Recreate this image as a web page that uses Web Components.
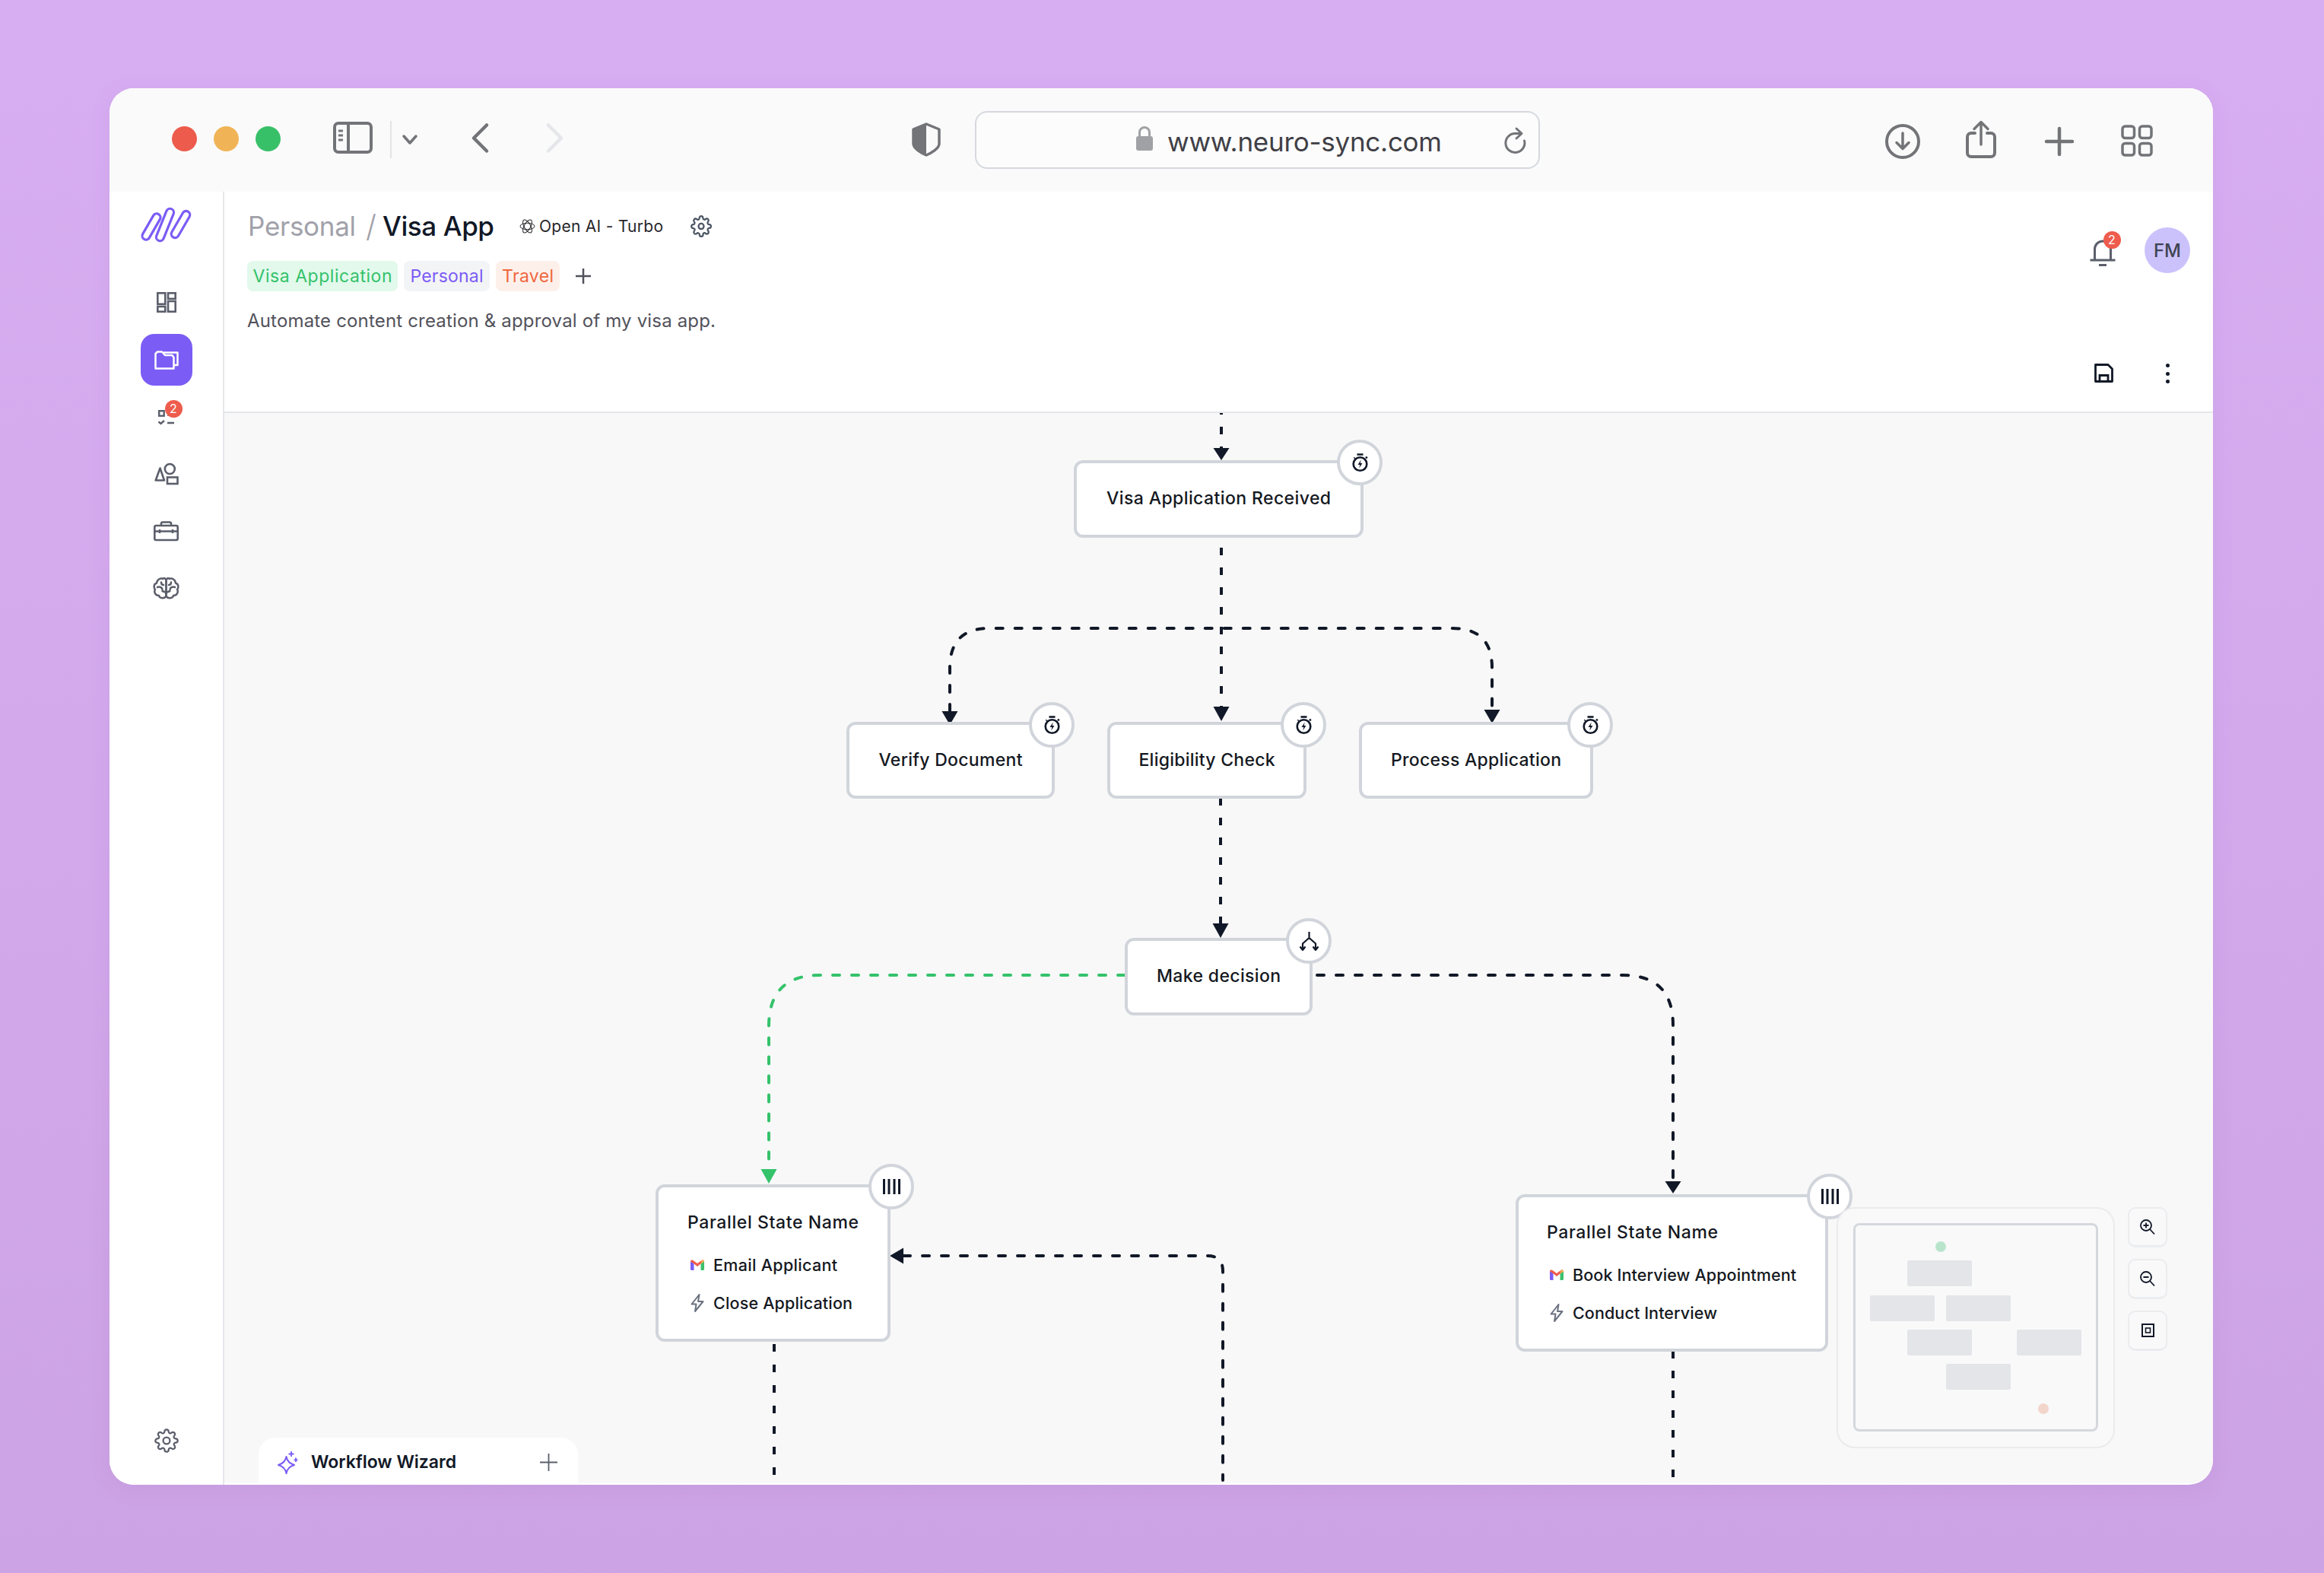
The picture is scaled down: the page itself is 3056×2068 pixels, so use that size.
<!DOCTYPE html>
<html lang="en">
<head>
<meta charset="utf-8">
<title>Neuro Sync</title>
<style>
html,body{margin:0;padding:0}
body{width:3056px;height:2068px;box-sizing:border-box;padding:116px 146px 116px 144px;display:flex;background:linear-gradient(180deg,#d8aef2 0%,#d3a9ec 50%,#cca3e4 100%);font-family:Inter,"Liberation Sans",sans-serif;color:#111827;overflow:hidden}
</style>
</head>
<body>
<app-window>
  <browser-bar slot="bar"></browser-bar>
  <side-nav slot="nav"></side-nav>
  <project-header slot="head"></project-header>
  <flow-canvas slot="canvas">
    <flow-node x="1412" y="605" w="381" h="102" bx="1788" by="608" icon="watch"><t-x w="295">Visa Application Received</t-x></flow-node>
    <flow-node x="1113" y="949" w="274" h="101" bx="1383" by="953" icon="watch"><t-x w="189">Verify Document</t-x></flow-node>
    <flow-node x="1456" y="949" w="262" h="101" bx="1714" by="953" icon="watch"><t-x w="179">Eligibility Check</t-x></flow-node>
    <flow-node x="1787" y="949" w="308" h="101" bx="2091" by="953" icon="watch"><t-x w="224">Process Application</t-x></flow-node>
    <flow-node x="1479" y="1233" w="247" h="102" bx="1721" by="1237" icon="branch"><t-x w="163">Make decision</t-x></flow-node>
    <flow-node x="862" y="1557" w="309" h="207" bx="1172" by="1560" icon="bars" stack>
      <t-x w="225">Parallel State Name</t-x>
      <state-row icon="gmail" first><t-x w="163">Email Applicant</t-x></state-row>
      <state-row icon="bolt"><t-x w="183">Close Application</t-x></state-row>
    </flow-node>
    <flow-node x="1993" y="1570" w="411" h="207" bx="2406" by="1573" icon="bars" stack>
      <t-x w="225">Parallel State Name</t-x>
      <state-row icon="gmail" first><t-x w="294">Book Interview Appointment</t-x></state-row>
      <state-row icon="bolt"><t-x w="190">Conduct Interview</t-x></state-row>
    </flow-node>
    <mini-map></mini-map>
    <zoom-controls></zoom-controls>
    <wizard-panel></wizard-panel>
  </flow-canvas>
</app-window>
<script>
const ICONS={
 panel:[52,42,'<rect x="2" y="2" width="48" height="38" rx="5" stroke-width="4"/><path d="M20 2V40" stroke-width="4"/><path d="M7 12h6M7 18h6M7 24h6" stroke-width="3"/>'],
 chev:[20,12,'<path d="M2 2l8 9 8-9" stroke-width="3.5" stroke-linecap="round" stroke-linejoin="round"/>'],
 back:[22,39,'<path d="M20 2.5L3 19.5 20 36.5" stroke-width="4.5" stroke-linecap="round" stroke-linejoin="round"/>'],
 fwd:[22,39,'<path d="M2 2.5L19 19.5 2 36.5" stroke-width="4.5" stroke-linecap="round" stroke-linejoin="round"/>'],
 shield:[38,45,'<path d="M19 2L36 9V28C36 34 26 40 19 43C12 40 2 34 2 28V9Z" stroke-width="3.5" stroke-linejoin="round"/><path d="M19 2L2 9V28C2 34 12 40 19 43Z" fill="currentColor" stroke="none"/>'],
 lock:[22,32,'<path d="M4.5 14V8a6.5 6.5 0 0 1 13 0v6" stroke-width="3"/><rect x="0" y="13" width="22" height="19" rx="3" fill="currentColor" stroke="none"/>'],
 reload:[30,34,'<path d="M24.5 15a12.5 12.5 0 1 1-12-9.500H20" transform="translate(2 2)" stroke-width="3" stroke-linecap="round"/><path d="M16 1l7 6.500-7 6.500" stroke-width="3" stroke-linecap="round" stroke-linejoin="round"/>'],
 download:[46,46,'<circle cx="23" cy="23" r="21" stroke-width="4"/><path d="M23 12V32M15 24.500l8 8 8-8" stroke-width="3.500" stroke-linecap="round" stroke-linejoin="round"/>'],
 share:[40,50,'<path d="M12 17H7a5 5 0 0 0-5 5V43a5 5 0 0 0 5 5H33a5 5 0 0 0 5-5V22a5 5 0 0 0-5-5H28" stroke-width="4" stroke-linecap="round"/><path d="M20 3V32M11 11.500L20 2.500l9 9" stroke-width="3.500" stroke-linecap="round" stroke-linejoin="round"/>'],
 plus:[38,38,'<path d="M19 2V36M2 19H36" stroke-width="4.500" stroke-linecap="round"/>'],
 grid:[42,42,'<rect x="2" y="2" width="15.500" height="15.500" rx="3.500" stroke-width="3.500"/><rect x="24.500" y="2" width="15.500" height="15.500" rx="3.500" stroke-width="3.500"/><rect x="2" y="24.500" width="15.500" height="15.500" rx="3.500" stroke-width="3.500"/><rect x="24.500" y="24.500" width="15.500" height="15.500" rx="3.500" stroke-width="3.500"/>'],
 logo:[65,42,'<g stroke-width="3.200"><rect x="-5" y="-19" width="10" height="38" rx="5" transform="translate(13 23) rotate(30)"/><rect x="-5" y="-22.500" width="10" height="45" rx="5" transform="translate(31 20.500) rotate(22)"/><rect x="-5" y="-19.500" width="10" height="39" rx="5" transform="translate(51.500 20) rotate(30)"/></g>'],
 dash:[26,27,'<g stroke-width="2.600"><rect x="1.300" y="1.300" width="10" height="14.500"/><rect x="15" y="1.300" width="9.700" height="7.500"/><rect x="1.300" y="19" width="10" height="6.700"/><rect x="15" y="12" width="9.700" height="13.700"/></g>'],
 folder:[32,26,'<path d="M25.500 10V24.500H1.500V5L4 2.500H10L14 7H23.500Z" stroke-width="2.500" stroke-linejoin="round"/><path d="M12 3.500H30.500V20H26" stroke-width="2.500" stroke-linejoin="round"/>'],
 check:[21,20,'<rect x="1.200" y="1.200" width="6.500" height="6.500" stroke-width="2.400"/><path d="M12 6.500H21M12 17H21" stroke-width="2.400"/><path d="M.5 15.500l3 2.500 4.500-4" stroke-width="2.400"/>'],
 shapes:[32,28,'<g stroke-width="2.600"><path d="M7.500 6.500L13 22.500H1.700Z" stroke-linejoin="round"/><circle cx="20.300" cy="7.500" r="6.500"/><rect x="17" y="18.500" width="13.500" height="8.500"/></g>'],
 brief:[33,26,'<g stroke-width="2.600" stroke-linejoin="round"><rect x="1.300" y="6" width="30.400" height="19" rx="2"/><path d="M10 6V3.500A2 2 0 0 1 12 1.500H21A2 2 0 0 1 23 3.500V6M1.500 13.500H31.500M8 11V16M25 11V16"/></g>'],
 brain:[35,30,'<g stroke-width="2.500" stroke-linecap="round" stroke-linejoin="round"><path d="M17.500 26C15 29.500 9 29 8 25C3.500 25 1 20.500 3 17C.5 14 1.500 9.500 5 8.500C5.500 4 10 1.500 13 3C14.500 1.500 16.500 2 17.500 4.500V26Z"/><path d="M6 14C9 13 12 14 12.500 17M11 7.500C11 10 12.500 11 14 11M17.500 21L12.500 19"/><g transform="translate(35 0) scale(-1 1)"><path d="M17.500 26C15 29.500 9 29 8 25C3.500 25 1 20.500 3 17C.5 14 1.500 9.500 5 8.500C5.500 4 10 1.500 13 3C14.500 1.500 16.500 2 17.500 4.500V26Z"/><path d="M6 14C9 13 12 14 12.500 17M11 7.500C11 10 12.500 11 14 11M17.500 21L12.500 19"/></g></g>'],
 gear:[32,32,'<g transform="scale(1.333)" stroke-width="1.700" stroke-linejoin="round"><circle cx="12" cy="12" r="3.300"/><path d="M19.400 15a1.650 1.650 0 0 0 .33 1.820l.06.06a2 2 0 0 1 0 2.830 2 2 0 0 1-2.830 0l-.06-.06a1.650 1.650 0 0 0-1.820-.33 1.650 1.650 0 0 0-1 1.510V21a2 2 0 0 1-2 2 2 2 0 0 1-2-2v-.09A1.650 1.650 0 0 0 9 19.400a1.650 1.650 0 0 0-1.820.33l-.06.06a2 2 0 0 1-2.830 0 2 2 0 0 1 0-2.830l.06-.06a1.650 1.650 0 0 0 .33-1.820 1.650 1.650 0 0 0-1.510-1H3a2 2 0 0 1-2-2 2 2 0 0 1 2-2h.09A1.650 1.650 0 0 0 4.600 9a1.650 1.650 0 0 0-.33-1.820l-.06-.06a2 2 0 0 1 0-2.830 2 2 0 0 1 2.830 0l.06.06a1.650 1.650 0 0 0 1.820.33H9a1.650 1.650 0 0 0 1-1.510V3a2 2 0 0 1 2-2 2 2 0 0 1 2 2v.09a1.650 1.650 0 0 0 1 1.510 1.650 1.650 0 0 0 1.820-.33l.06-.06a2 2 0 0 1 2.830 0 2 2 0 0 1 0 2.830l-.06.06a1.650 1.650 0 0 0-.33 1.820V9a1.650 1.650 0 0 0 1.510 1H21a2 2 0 0 1 2 2 2 2 0 0 1-2 2h-.09a1.650 1.650 0 0 0-1.510 1z"/></g>'],
 gearS:[28,29,'<g transform="scale(1.170 1.210)" stroke-width="1.900" stroke-linejoin="round"><circle cx="12" cy="12" r="3"/><path d="M19.400 15a1.650 1.650 0 0 0 .33 1.820l.06.06a2 2 0 0 1 0 2.830 2 2 0 0 1-2.830 0l-.06-.06a1.650 1.650 0 0 0-1.820-.33 1.650 1.650 0 0 0-1 1.510V21a2 2 0 0 1-2 2 2 2 0 0 1-2-2v-.09A1.650 1.650 0 0 0 9 19.400a1.650 1.650 0 0 0-1.820.33l-.06.06a2 2 0 0 1-2.830 0 2 2 0 0 1 0-2.830l.06-.06a1.650 1.650 0 0 0 .33-1.820 1.650 1.650 0 0 0-1.510-1H3a2 2 0 0 1-2-2 2 2 0 0 1 2-2h.09A1.650 1.650 0 0 0 4.600 9a1.650 1.650 0 0 0-.33-1.820l-.06-.06a2 2 0 0 1 0-2.830 2 2 0 0 1 2.830 0l.06.06a1.650 1.650 0 0 0 1.820.33H9a1.650 1.650 0 0 0 1-1.510V3a2 2 0 0 1 2-2 2 2 0 0 1 2 2v.09a1.650 1.650 0 0 0 1 1.510 1.650 1.650 0 0 0 1.820-.33l.06-.06a2 2 0 0 1 2.830 0 2 2 0 0 1 0 2.830l-.06.06a1.650 1.650 0 0 0-.33 1.820V9a1.650 1.650 0 0 0 1.510 1H21a2 2 0 0 1 2 2 2 2 0 0 1-2 2h-.09a1.650 1.650 0 0 0-1.510 1z"/></g>'],
 openai:[21,21,'<g stroke-width="1"><ellipse cx="10.500" cy="10.500" rx="9.500" ry="4.200"/><ellipse cx="10.500" cy="10.500" rx="9.500" ry="4.200" transform="rotate(60 10.500 10.500)"/><ellipse cx="10.500" cy="10.500" rx="9.500" ry="4.200" transform="rotate(120 10.500 10.500)"/></g>'],
 plusS:[22,20,'<path d="M11 0V20M1 10H21" stroke-width="2.500"/>'],
 bell:[34,35,'<path d="M6.500 26V12.500A10.500 10.500 0 0 1 27.500 12.500V26" stroke-width="3"/><path d="M0.500 27H33.500" stroke-width="3"/><path d="M12 33.500H22" stroke-width="3"/>'],
 save:[25,25,'<path d="M1.500 1.500H18L23.500 7V23.500H1.500Z" stroke-width="2.800" stroke-linejoin="round"/><path d="M7 23V15.500H18V23" stroke-width="2.800"/>'],
 watch:[21,24,'<path d="M6.500 1.500H14.500" stroke-width="2.600"/><circle cx="10.500" cy="14" r="8.800" stroke-width="2.600"/><path d="M18 4.500L19.800 6.300" stroke-width="2.400"/><path d="M2.500 6.500L3.500 5.500" stroke-width="2.200"/><path d="M11.800 8.500L7.500 15H10.300L9.200 19.500L13.500 13H10.700Z" fill="currentColor" stroke="none"/>'],
 bars:[23,20,'<path d="M1.500 0V20M8 0V20M15 0V20M21.500 0V20" stroke-width="3"/>'],
 branch:[25,25,'<path d="M12.500 0V8M12.500 8L4 15.500V24M12.500 8L21 15.500V24M.500 19.500L4 24L7.500 19.500M17.500 19.500L21 24L24.500 19.500" stroke-width="2.200" stroke-linejoin="round"/>'],
 bolt:[18,24,'<path d="M11.500 1L1.500 13.500H7.500L6 23L16.500 10H10Z" stroke-width="2" stroke-linejoin="round"/>'],
 gmail:[18,14,'<path d="M0 2.500H4.500V14H1.500A1.500 1.500 0 0 1 0 12.500Z" fill="#7b5cf5" stroke="none"/><path d="M13.500 2.500H18V12.500A1.500 1.500 0 0 1 16.500 14H13.500Z" fill="#3cc06c" stroke="none"/><path d="M0 2.500C0 .5 2 0 3.500 1L9 5 14.500 1C16 0 18 .5 18 2.500L13.500 5.500 9 9 4.500 5.500Z" fill="#ef5c4c" stroke="none"/><path d="M14.500 1C16 0 18 .5 18 2.500L13.500 5.500Z" fill="#f1b458" stroke="none"/>'],
 zoomIn:[20,20,'<circle cx="8" cy="8" r="7" stroke-width="1.800"/><path d="M13 13L19 19.500M8 4.500V11.500M4.500 8H11.500" stroke-width="1.800"/>'],
 zoomOut:[20,20,'<circle cx="8" cy="8" r="7" stroke-width="1.800"/><path d="M13 13L19 19.500M4.500 8H11.500" stroke-width="1.800"/>'],
 fit:[17,18,'<rect x="1" y="1" width="15" height="16" stroke-width="2"/><rect x="5.500" y="6" width="6" height="6" stroke-width="1.600"/>'],
 spark:[27,30,'<path d="M11.500 8Q13 16.500 22 19Q13 21.500 11.500 30Q10 21.500 1 19Q10 16.500 11.500 8Z" stroke-width="2" stroke-linejoin="round"/><path d="M18 1V8M14.500 4.500H21.500M24 9.500V15M21.500 12.300H26.500" stroke-width="1.800"/>'],
 plusT:[23,23,'<path d="M11.500 0V23M0 11.500H23" stroke-width="1.800"/>']
};
class Comp extends HTMLElement{
  connectedCallback(){
    if(this.shadowRoot)return;
    this.attachShadow({mode:'open'}).innerHTML=this.render();
  }
  render(){return '<slot></slot>'}
}
customElements.define('app-window',class extends Comp{render(){return `<style>
:host{display:flex;flex:1;flex-direction:column;background:#fff;border-radius:32px;overflow:hidden;box-shadow:0 6px 30px rgba(120,70,160,.08)}
.main{display:flex;flex:1;min-height:0}
.col{display:flex;flex-direction:column;flex:1;min-width:0}
</style><slot name="bar"></slot><div class="main"><slot name="nav"></slot><div class="col"><slot name="head"></slot><slot name="canvas"></slot></div></div>`}});
customElements.define('browser-bar',class extends Comp{render(){return `<style>
:host{display:flex;height:136px;background:#fafafa;color:#737478;flex:none;align-items:flex-start}
ui-icon{flex:none}
.dots{display:flex;gap:22px;margin:50px 0 0 82px}
.dots i{width:33px;height:33px;border-radius:50%;display:block}
.sep{width:2px;height:49px;background:#e4e4e7;margin:43px 0 0 23px;flex:none}
.url{flex:none;box-sizing:border-box;width:743px;height:76px;margin:30px 0 0 45px;border:2.5px solid #d5d9de;border-radius:16px;background:#fcfcfc;display:flex;align-items:center;padding-left:210px;color:#3f3f46;font-size:35px}
</style>
<div class="dots"><i style="background:#ec5b4c"></i><i style="background:#f0b456"></i><i style="background:#38c069"></i></div>
<ui-icon name="panel" style="margin:44px 0 0 69px"></ui-icon>
<div class="sep"></div>
<ui-icon name="chev" style="margin:61px 0 0 14px"></ui-icon>
<ui-icon name="back" style="margin:46px 0 0 71px"></ui-icon>
<ui-icon name="fwd" style="margin:46px 0 0 77px;color:#e5e6ea"></ui-icon>
<ui-icon name="shield" style="margin:45px 0 0 458px"></ui-icon>
<div class="url"><ui-icon name="lock" style="color:#a0a1a5;margin-top:-4px"></ui-icon><t-x w="361" style="margin:3px 0 0 19px;line-height:44px">www.neuro-sync.com</t-x><ui-icon name="reload" style="margin-left:auto;margin-right:15px;margin-top:2px;color:#737478"></ui-icon></div>
<ui-icon name="download" style="margin:47px 0 0 454px"></ui-icon>
<ui-icon name="share" style="margin:42px 0 0 60px"></ui-icon>
<ui-icon name="plus" style="margin:51px 0 0 64px"></ui-icon>
<ui-icon name="grid" style="margin:48px 0 0 62px"></ui-icon>`}});
customElements.define('count-badge',class extends Comp{render(){return `<style>
:host{position:absolute;width:23px;height:23px;border-radius:50%;background:#ee5c4d;color:#fff;font-size:16px;line-height:23px;text-align:center;font-weight:400}
</style><slot></slot>`}});
customElements.define('side-nav',class extends Comp{render(){return `<style>
:host{display:flex;flex-direction:column;align-items:center;width:149px;flex:none;background:#fff;border-right:2px solid #e5e7eb;color:#5b5f6b;padding:23px 0 42px}
.logo{color:#7b5cf5;margin-bottom:46.5px}
.slots{display:flex;flex-direction:column;gap:7.2px}
.s{width:68px;height:68px;display:flex;align-items:center;justify-content:center;border-radius:18px}
.s.on{background:#7b5cf5;color:#fff}
.w{position:relative;display:flex}
.g{margin-top:auto}
</style>
<ui-icon class="logo" name="logo"></ui-icon>
<div class="slots">
<div class="s"><ui-icon name="dash"></ui-icon></div>
<div class="s on"><ui-icon name="folder"></ui-icon></div>
<div class="s"><div class="w" style="margin-top:2px"><ui-icon name="check"></ui-icon><count-badge style="left:8.5px;top:-12.5px">2</count-badge></div></div>
<div class="s"><ui-icon name="shapes"></ui-icon></div>
<div class="s"><ui-icon name="brief"></ui-icon></div>
<div class="s"><ui-icon name="brain"></ui-icon></div>
</div>
<ui-icon class="g" name="gear"></ui-icon>`}});
customElements.define('tag-pill',class extends Comp{render(){return `<style>
:host{display:flex;align-items:center;height:40px;border-radius:8px;padding:0 8px;font-size:23px;background:${this.getAttribute('bg')};color:${this.getAttribute('fg')}}
</style><slot></slot>`}});
customElements.define('project-header',class extends Comp{render(){return `<style>
:host{display:flex;justify-content:space-between;height:289px;flex:none;background:#fff;border-bottom:2px solid #e5e7eb}
.l{padding:20px 0 0 31px}
.title{display:flex;align-items:center;height:50px}
.tags{display:flex;align-items:center;gap:8px;margin:21px 0 0 -1px}
.desc{margin:22px 0 0 -1px;font-size:24px;color:#52525b;line-height:34px;height:34px}
.r{display:flex;flex-direction:column;align-items:flex-end;padding:47px 30px 0 0}
.r1{display:flex;align-items:center}
.bell{position:relative;display:flex;color:#5b5f6b;margin:7px 38px 0 0}
.av{width:60px;height:60px;border-radius:50%;background:#cbc2fc;color:#3f4452;font-size:24px;font-weight:500;display:flex;align-items:center;justify-content:center}
.r2{display:flex;align-items:flex-start;margin:119px 27.5px 0 0}
.dots{display:flex;flex-direction:column;gap:5.500px;margin-left:68.500px}
.dots i{width:5px;height:5px;border-radius:50%;background:#111827;display:block;margin:0}
</style>
<div class="l">
<div class="title">
<t-x w="142" style="font-size:35px;color:#a1a1aa">Personal</t-x>
<t-x w="11" style="font-size:40px;font-weight:300;color:#a1a1aa;margin:0 11px 0 13px">/</t-x>
<t-x w="147" style="font-size:35px;font-weight:500;color:#111827">Visa App</t-x>
<ui-icon name="openai" style="margin:0 5px 0 33px;color:#27272a"></ui-icon>
<t-x w="163" style="font-size:21px;color:#27272a">Open AI - Turbo</t-x>
<ui-icon name="gearS" style="margin-left:36px;color:#4b5563"></ui-icon>
</div>
<div class="tags">
<tag-pill bg="#e2f9ec" fg="#34c26a" style="padding:0 7.500px"><t-x w="183">Visa Application</t-x></tag-pill>
<tag-pill bg="#f3f4f6" fg="#7b5cf5" style="padding:0 8.500px"><t-x w="96">Personal</t-x></tag-pill>
<tag-pill bg="#fdf0ea" fg="#f0673f"><t-x w="68">Travel</t-x></tag-pill>
<ui-icon name="plusS" style="margin-left:12px;color:#52525b"></ui-icon>
</div>
<div class="desc"><t-x w="616">Automate content creation &amp; approval of my visa app.</t-x></div>
</div>
<div class="r">
<div class="r1"><div class="bell"><ui-icon name="bell"></ui-icon><count-badge style="left:17.500px;top:-11.500px">2</count-badge></div><div class="av"><t-x w="36">FM</t-x></div></div>
<div class="r2"><ui-icon name="save" style="color:#111827"></ui-icon><div class="dots"><i></i><i></i><i></i></div></div>
</div>`}});
customElements.define('flow-canvas',class extends Comp{render(){
const d='#111827',g='#34c26a';
return `<style>
:host{display:block;position:relative;flex:1;background:#f8f8f8;margin-bottom:2px;overflow:hidden;border-bottom-right-radius:30px;font-size:23px;font-weight:450;color:#141821}
svg{position:absolute;left:0;top:0}
</style>
<svg width="2615" height="1407" viewBox="295 543 2615 1407" fill="none" stroke-width="4">
<g stroke="${d}" stroke-dasharray="10 16">
<path d="M1606 535V590"/><path d="M1606 720V930"/><path d="M1605 1049V1214"/><path d="M2200 1776V1942"/>
</g>
<path d="M1018 1767V1942" stroke="${d}" stroke-dasharray="10 17"/>
<g stroke="${d}" stroke-dasharray="9 16" stroke-linecap="round">
<path d="M1249 935V878Q1249 826 1301 826H1910Q1962 826 1962 878V935"/>
<path d="M1732 1282H2134Q2200 1282 2200 1348V1553"/>
<path d="M1188 1651H1588Q1608 1651 1608 1671V1946"/>
</g>
<path d="M1479 1282H1078Q1011 1282 1011 1349V1537" stroke="${g}" stroke-dasharray="9 16" stroke-linecap="round"/>
<g fill="${d}">
<path d="M1595.500 589H1616.500L1606 605Z"/><path d="M1238.500 935H1259.500L1249 953Z"/><path d="M1595.500 929H1616.500L1606 948Z"/><path d="M1951.500 933H1972.500L1962 951Z"/><path d="M1594.500 1214H1615.500L1605 1233Z"/><path d="M2189.500 1553H2210.500L2200 1569Z"/><path d="M1188 1640.500V1661.500L1170 1651Z"/>
</g>
<path d="M1000.500 1537H1021.500L1011 1556Z" fill="${g}"/>
</svg>
<slot></slot>`}});
customElements.define('flow-node',class extends Comp{render(){
const n=k=>+this.getAttribute(k),st=this.hasAttribute('stack');
return `<style>
:host{position:absolute;left:${n('x')-295}px;top:${n('y')-543}px;width:${n('w')}px;height:${n('h')}px;box-sizing:border-box;background:#fff;border:4px solid #d1d5db;border-radius:12px;display:flex;${st?'flex-direction:column;padding:29px 0 0 '+(n('x')===862?38:37)+'px;line-height:34px':'align-items:center;justify-content:center;line-height:34px;padding-bottom:2px'}}
.b{position:absolute;left:${n('bx')-n('x')-34}px;top:${n('by')-n('y')-34}px;width:60px;height:60px;box-sizing:border-box;border:4px solid #d1d5db;border-radius:50%;background:#fff;display:flex;align-items:center;justify-content:center;color:#111827}
</style><slot></slot><div class="b"><ui-icon name="${this.getAttribute('icon')}"></ui-icon></div>`}});
customElements.define('state-row',class extends Comp{render(){
const f=this.hasAttribute('first');
return `<style>
:host{display:flex;align-items:center;height:34px;margin-top:${f?22:16}px;font-size:21.5px;color:#141821}
ui-icon{margin-left:4px;color:#6b7280;flex:none}
.i{width:34px;flex:none;display:flex}
</style><div class="i"><ui-icon name="${this.getAttribute('icon')}"></ui-icon></div><slot></slot>`}});
customElements.define('mini-map',class extends Comp{render(){
const rs=[[2508,1657],[2459,1703],[2559,1703],[2508,1748],[2651.5,1748],[2559,1793]].map(([x,y])=>`<i style="left:${x-2437-3}px;top:${y-1608-3}px"></i>`).join('');
return `<style>
:host{position:absolute;left:2120px;top:1044px;width:366px;height:317px;box-sizing:border-box;background:#f9f9f9;border:2px solid #ebebee;border-radius:24px;padding:19px 20px}
.f{position:relative;box-sizing:border-box;width:322px;height:274px;border:3px solid #d5d8dd;border-radius:8px;background:#f9f9f9}
i{position:absolute;width:85px;height:34px;background:#e4e5e9;border-radius:2px;display:block}
b{position:absolute;width:14px;height:14px;border-radius:50%}
</style><div class="f">${rs}<b style="left:${2544.5-2437-3}px;top:${1632-1608-3}px;background:#b9e4cc"></b><b style="left:${2680-2437-3}px;top:${1845-1608-3}px;background:#f2d5cb"></b></div>`}});
customElements.define('zoom-controls',class extends Comp{render(){return `<style>
:host{position:absolute;left:2503px;top:1044px;display:flex;flex-direction:column;gap:15px;color:#111827}
div{box-sizing:border-box;width:52px;height:53px;border:2px solid #ebecef;border-bottom-width:3px;border-radius:10px;background:#f9f9f9;display:flex;align-items:center;justify-content:center}
</style><div><ui-icon name="zoomIn"></ui-icon></div><div><ui-icon name="zoomOut"></ui-icon></div><div><ui-icon name="fit"></ui-icon></div>`}});
customElements.define('wizard-panel',class extends Comp{render(){return `<style>
:host{position:absolute;left:45px;top:1347px;width:420px;height:60px;box-sizing:border-box;background:#fff;border-radius:22px 22px 0 0;display:flex;align-items:center;padding:4px 27px 0 25px;font-weight:600;color:#111827}
</style><ui-icon name="spark" style="color:#7b5cf5"></ui-icon><t-x w="191" style="margin-left:17px;font-size:23px">Workflow Wizard</t-x><ui-icon name="plusT" style="margin-left:auto;color:#5b5f6b"></ui-icon>`}});
customElements.define('ui-icon',class extends HTMLElement{connectedCallback(){
 if(this.shadowRoot)return;
 const [w,h,s]=ICONS[this.getAttribute('name')];
 this.attachShadow({mode:'open'}).innerHTML=`<style>:host{display:inline-flex;flex:none}svg{display:block;overflow:visible}</style><svg width="${w}" height="${h}" viewBox="0 0 ${w} ${h}" fill="none" stroke="currentColor">${s}</svg>`;
}});
const ctx=document.createElement('canvas').getContext('2d');
customElements.define('t-x',class extends HTMLElement{connectedCallback(){
 if(this.shadowRoot)return;
 this.attachShadow({mode:'open'}).innerHTML='<style>:host{display:inline-block;white-space:nowrap;flex:none}</style><slot></slot>';
 const w=+this.getAttribute('w'),c=getComputedStyle(this),t=this.textContent;
 ctx.font=`${c.fontWeight} ${c.fontSize} ${c.fontFamily}`;
 const m=ctx.measureText(t).width;
 this.style.width=w+'px';
 if(t.length>1)this.style.letterSpacing=((w-m)/(t.length-1)).toFixed(3)+'px';
}});
</script>
</body>
</html>
